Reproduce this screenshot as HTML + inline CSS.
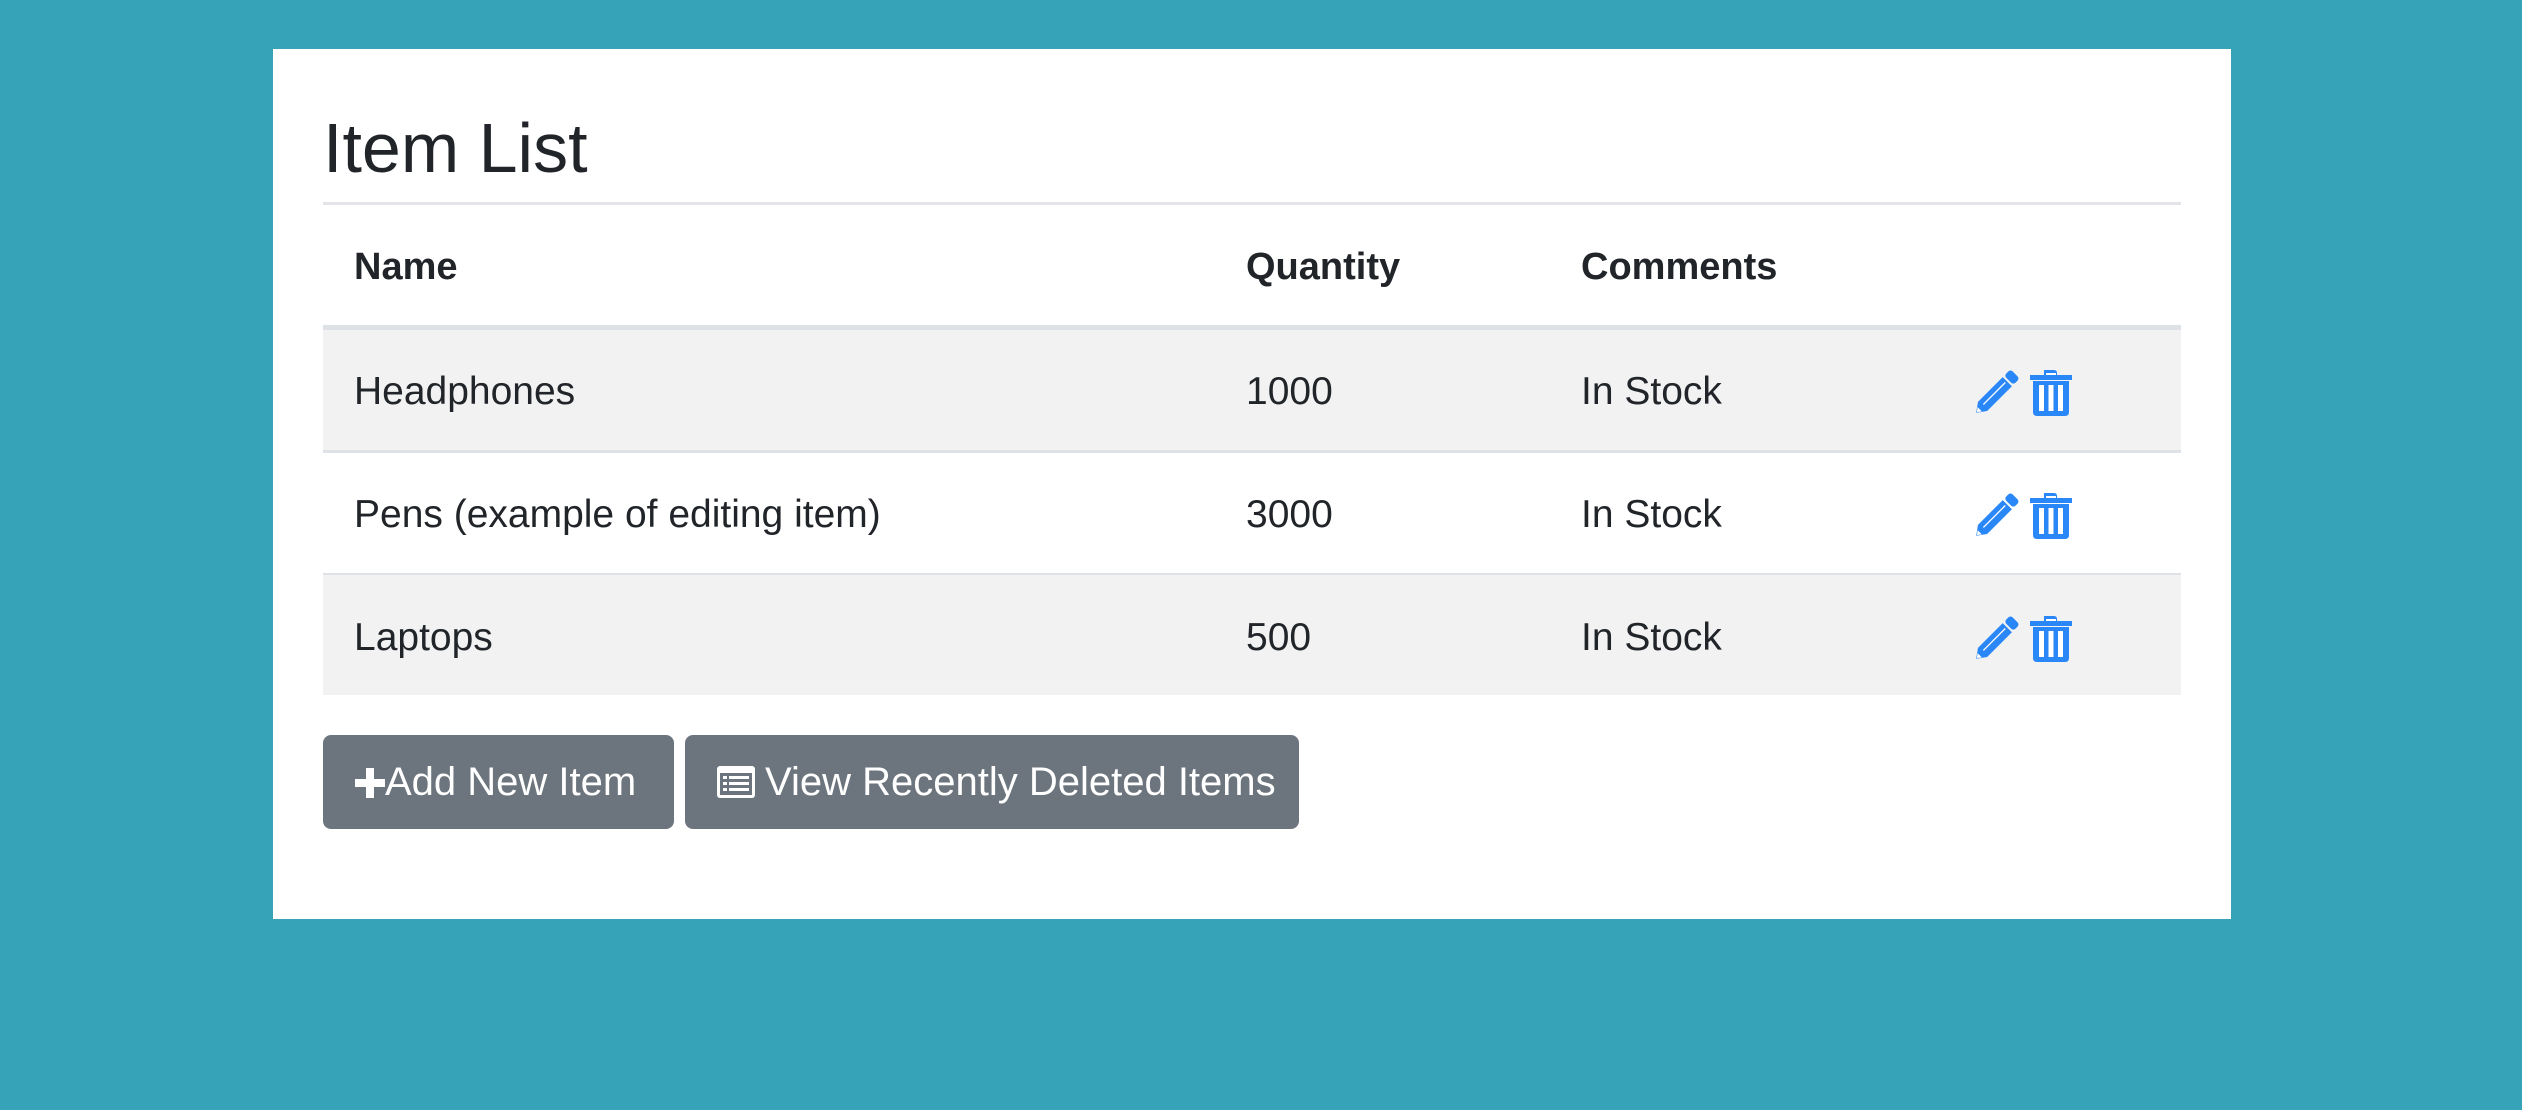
<!DOCTYPE html>
<html><head><meta charset="utf-8"><style>
body{margin:0;width:2522px;height:1110px;background:#37a3b8;font-family:"Liberation Sans",sans-serif;color:#212529;overflow:hidden;position:relative}
.card{position:absolute;left:273px;top:49px;width:1958px;height:870px;background:#fff}
.a{position:absolute;white-space:nowrap}
.t{font-size:39px}
.h{font-size:38px;font-weight:bold}
.row{position:absolute;left:323px;width:1858px}
.btn{position:absolute;top:735px;height:94px;background:#6c757d;border-radius:8px;color:#fff;font-size:40px;line-height:94px;box-sizing:border-box;padding-left:30px}
</style></head><body>
<div class="card"></div>
<div class="a" style="left:323px;top:106px;font-size:70px;line-height:84px">Item List</div>
<div class="row" style="top:202px;height:3px;background:#e3e5e8"></div>
<div class="a h" style="left:354px;top:246px">Name</div>
<div class="a h" style="left:1246px;top:246px">Quantity</div>
<div class="a h" style="left:1581px;top:246px">Comments</div>
<div class="row" style="top:325px;height:5px;background:#dee2e6"></div>
<div class="row" style="top:330px;height:120px;background:#f2f2f2"></div>
<div class="row" style="top:450px;height:3px;background:#dee2e6"></div>
<div class="row" style="top:573px;height:2px;background:#dee2e6"></div>
<div class="row" style="top:575px;height:120px;background:#f2f2f2"></div>

<div class="a t" style="left:354px;top:370px">Headphones</div>
<div class="a t" style="left:1246px;top:370px">1000</div>
<div class="a t" style="left:1581px;top:370px">In Stock</div>
<div class="a t" style="left:354px;top:493px">Pens (example of editing item)</div>
<div class="a t" style="left:1246px;top:493px">3000</div>
<div class="a t" style="left:1581px;top:493px">In Stock</div>
<div class="a t" style="left:354px;top:616px">Laptops</div>
<div class="a t" style="left:1246px;top:616px">500</div>
<div class="a t" style="left:1581px;top:616px">In Stock</div>

<svg width="0" height="0" style="position:absolute"><defs>
<g id="ic" fill="#2a87f7">
<g transform="translate(23,23) rotate(-45)">
<path d="M-28 0L-19 -6.5H16V6.5H-19Z"/>
<rect x="18" y="-6.5" width="9" height="13" rx="3"/>
<path d="M-27 0L-23 -3V3Z" fill="#fff"/>
<rect x="-17" y="-1.5" width="31" height="1.3" fill="#fff"/>
</g>
<path d="M71 0h10q3 0 3 3v2h15v5H57V5h14V3q0-3 0-3z M60 11h36v31q0 4-4 4H64q-4 0-4-4z"/>
<rect x="66" y="15" width="5" height="26" fill="#fff"/><rect x="75.5" y="15" width="5" height="26" fill="#fff"/><rect x="85" y="15" width="5" height="26" fill="#fff"/>
<rect x="73" y="3" width="10" height="2" fill="#fff"/>
</g></defs></svg>
<svg class="a" style="left:1973px;top:370px" width="100" height="48"><use href="#ic"/></svg>
<svg class="a" style="left:1973px;top:493px" width="100" height="48"><use href="#ic"/></svg>
<svg class="a" style="left:1973px;top:616px" width="100" height="48"><use href="#ic"/></svg>

<div class="btn" style="left:323px;width:351px;padding-left:32px"><svg width="30" height="30" style="vertical-align:-3px"><path d="M11 0h8v11h11v8H19v11h-8V19H0v-8h11z" fill="#fff"/></svg>Add New Item</div>
<div class="btn" style="left:685px;width:614px;padding-left:32px"><svg width="38" height="32" style="vertical-align:-3px;margin-right:10px"><rect x="0" y="0" width="38" height="32" rx="3" fill="#fff"/><rect x="3" y="7" width="32" height="22" fill="#6c757d"/><g fill="#fff"><rect x="6" y="10" width="4" height="3"/><rect x="12" y="10" width="20" height="3"/><rect x="6" y="16" width="4" height="3"/><rect x="12" y="16" width="20" height="3"/><rect x="6" y="22" width="4" height="3"/><rect x="12" y="22" width="20" height="3"/></g></svg>View Recently Deleted Items</div>
</body></html>
